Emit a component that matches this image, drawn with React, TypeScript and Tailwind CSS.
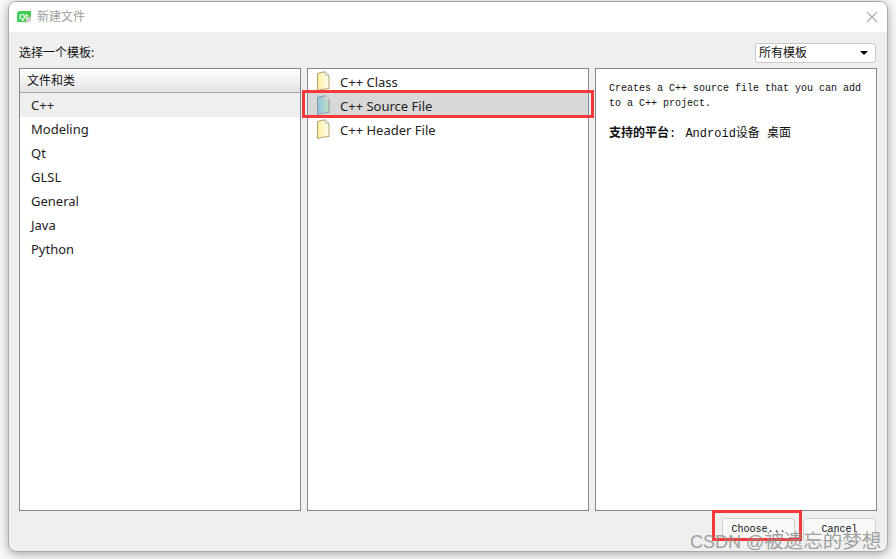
import React from 'react';

const CJK = "font-['Noto_Sans','Noto_Sans_CJK_SC',sans-serif]";
const MONO = "font-['Liberation_Mono','Noto_Sans_CJK_SC',monospace]";

const categories = ['C++', 'Modeling', 'Qt', 'GLSL', 'General', 'Java', 'Python'];
const templates = ['C++ Class', 'C++ Source File', 'C++ Header File'];

function QtLogo() {
  return (
    <svg width="15" height="14" viewBox="0 0 15 14" className="shrink-0">
      <path d="M2 1h12v6l-3 5H0V3z" fill="#41cd52" />
      <path d="M8 13.5l2-6 4.5-1.5-1 5z" fill="#c8c8c8" />
      <text x="2" y="8.5" fontSize="8" fontWeight="700" fill="#fff" fontFamily="Liberation Sans">Qt</text>
    </svg>
  );
}

function FileIcon({ blue }: { blue?: boolean }) {
  const id = blue ? 'fileBlue' : 'fileYellow';
  return (
    <svg width="14" height="20" viewBox="0 0 14 20" className="shrink-0">
      <defs>
        <linearGradient id={id} x1="0" y1="0" x2="1" y2="0">
          {blue ? <stop offset="0" stopColor="#8fc3e0" /> : <stop offset="0" stopColor="#fbf0a0" />}
          {blue ? <stop offset="1" stopColor="#bfe0c4" /> : <stop offset="1" stopColor="#fffdf0" />}
        </linearGradient>
      </defs>
      <path d="M1.5 2.5Q5 1.5 9 .8L13 4.5V17.5Q6 18 1.5 19.5Z" fill={`url(#${id})`} stroke={blue ? '#8a9aa0' : '#b39f68'} strokeWidth="1" />
      <path d="M9 .8V4.5H13Z" fill="#f4f4f4" stroke="#b5b5b5" strokeWidth="0.7" />
    </svg>
  );
}

export default function App() {
  return (
    <div className={`relative h-[559px] w-[896px] overflow-hidden bg-[#fbfbfb] ${CJK}`}>
      <div className="ml-2 mt-px flex h-[551px] w-[880px] flex-col overflow-hidden rounded-lg border border-[#ababab] bg-[#efefef] shadow-[0_2px_12px_rgba(0,0,0,0.35)]">
        <div className="flex h-[30px] shrink-0 items-center bg-white pl-[8px] pr-[9px]">
          <QtLogo />
          <span className="ml-[5px] text-[12px] text-[#a0a0a0]">新建文件</span>
          <svg width="12" height="12" viewBox="0 0 12 12" className="ml-auto">
            <path d="M1 1l10 10M11 1L1 11" stroke="#a8a8a8" strokeWidth="1.1" />
          </svg>
        </div>

        <div className="flex flex-1 flex-col pl-[10px] pr-[10px]">
          <div className="flex h-[36px] shrink-0 items-center justify-between pt-[6px]">
            <span className="text-[12px] text-[#111]">选择一个模板:</span>
            <div className="mr-[1px] flex h-[20px] w-[121px] items-center justify-between rounded-[3px] border border-[#c8c8c8] bg-white pl-[3px] pr-[7px] text-[12px] text-[#111]">
              所有模板
              <span className="h-0 w-0 border-x-[4px] border-t-[4px] border-x-transparent border-t-black" />
            </div>
          </div>

          <div className="grid h-[443px] shrink-0 grid-cols-[282px_282px_282px] gap-[6px]">
            <div className="border border-[#828790] bg-white">
              <div className="flex h-[24px] items-center border-b border-[#a8a8a8] bg-gradient-to-b from-white to-[#e4e4e4] pl-[7px] text-[12px] text-[#111]">
                文件和类
              </div>
              {categories.map((c, i) => (
                <div
                  key={c}
                  className={`flex h-[24px] items-center pl-[11px] pt-[1px] text-[13px] text-[#222] ${i === 0 ? 'bg-[#efefef]' : ''}`}
                >
                  {c}
                </div>
              ))}
            </div>

            <div className="border border-[#828790] bg-white">
              {templates.map((t, i) => (
                <div
                  key={t}
                  className={`flex h-[24px] items-center pl-[8px] text-[13px] text-[#222] ${i === 1 ? 'bg-[#d8d8d8]' : ''}`}
                >
                  <FileIcon blue={i === 1} />
                  <span className="ml-[10px] pt-[3px]">{t}</span>
                </div>
              ))}
            </div>

            <div className="border border-[#828790] bg-white px-[13px] pt-[13px] text-[#111]">
              <p className={`text-[10px] leading-[14.5px] ${MONO}`}>
                Creates a C++ source file that you can add to a C++ project.
              </p>
              <p className={`mt-[13px] text-[12px] leading-[17px] ${MONO}`}>
                <b className={CJK}>支持的平台</b>:<span className="ml-[2px]"> Android设备 桌面</span>
              </p>
            </div>
          </div>

          <div className="flex flex-1 justify-end gap-[8px] pr-[1px] pt-[7px]">
            {['Choose...', 'Cancel'].map(label => (
              <div
                key={label}
                className={`flex h-[23px] w-[73px] items-center justify-center rounded-[3px] border border-[#d0d0d0] bg-[#f8f8f8] text-[10px] text-[#111] ${MONO}`}
              >
                {label}
              </div>
            ))}
          </div>
        </div>
      </div>

      {/* annotations drawn on top of the screenshot */}
      <div className="absolute left-[302px] top-[90px] h-[28px] w-[292px] border-[3px] border-[#f93939]" />
      <div className="absolute left-[712px] top-[510px] h-[31px] w-[90px] border-[3px] border-[#f93939]" />
      <span className="absolute left-[690px] top-[528px] font-['Liberation_Sans','Noto_Sans_CJK_SC',sans-serif] text-[18px] leading-[26px] text-[#8a8a8a]/80">
        CSDN @<span className="text-[19.5px]">被遗忘的梦想</span>
      </span>
    </div>
  );
}
